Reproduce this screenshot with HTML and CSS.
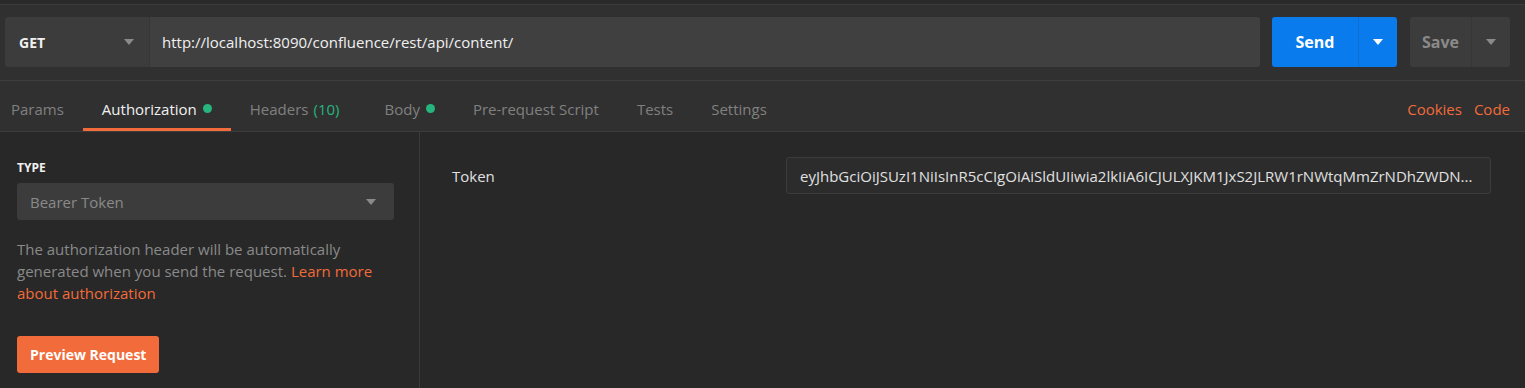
FILE: index.html
```html
<!DOCTYPE html>
<html>
<head>
<meta charset="utf-8">
<link rel="stylesheet" href="styles.css">
</head>
<body>
<div class="app">
  <div class="topstrip"></div>
  <div class="request-row">
    <div class="url-group">
      <div class="method">
        <span class="method-name">GET</span>
        <svg class="caret" width="10" height="6" viewBox="0 0 10 6"><path d="M0 0H10L5 6Z" fill="#8a8a8a"/></svg>
      </div>
      <div class="url">http://localhost:8090/confluence/rest/api/content/</div>
    </div>
    <div class="send">
      <span class="send-label">Send</span>
      <span class="send-caret"><svg width="10" height="6" viewBox="0 0 10 6"><path d="M0 0H10L5 6Z" fill="#ffffff"/></svg></span>
    </div>
    <div class="save">
      <span class="save-label">Save</span>
      <span class="save-caret"><svg width="10" height="6" viewBox="0 0 10 6"><path d="M0 0H10L5 6Z" fill="#8a8a8a"/></svg></span>
    </div>
  </div>
  <div class="tabs">
    <div class="tab-list">
      <div class="tab first">Params</div>
      <div class="tab active">Authorization <span class="dot"></span></div>
      <div class="tab headers">Headers <span class="count">(10)</span></div>
      <div class="tab">Body <span class="dot"></span></div>
      <div class="tab">Pre-request Script</div>
      <div class="tab">Tests</div>
      <div class="tab">Settings</div>
    </div>
    <div class="tab-links">
      <span class="link">Cookies</span>
      <span class="link">Code</span>
    </div>
  </div>
  <div class="content">
    <div class="left">
      <div class="type-label">TYPE</div>
      <div class="select">
        <span>Bearer Token</span>
        <svg width="10" height="6" viewBox="0 0 10 6"><path d="M0 0H10L5 6Z" fill="#8a8a8a"/></svg>
      </div>
      <p class="desc">The authorization header will be automatically generated when you send the request. <span class="link">Learn more about authorization</span></p>
      <div class="preview">Preview Request</div>
    </div>
    <div class="right">
      <div class="field">
        <div class="field-label">Token</div>
        <div class="token">eyJhbGciOiJSUzI1NiIsInR5cCIgOiAiSldUIiwia2lkIiA6ICJULXJKM1JxS2JLRW1rNWtqMmZrNDhZWDN...</div>
      </div>
    </div>
  </div>
</div>
</body>
</html>
```
FILE: styles.css
```css
* { box-sizing: border-box; }
html, body { margin: 0; padding: 0; }
body {
  background: #282828;
  font-family: "Open Sans", "Noto Sans", sans-serif;
  font-size: 15px;
  color: #e0e0e0;
  width: 1525px;
  height: 388px;
  overflow: hidden;
}
.app { display: flex; flex-direction: column; height: 388px; }
.topstrip {
  height: 5px;
  background: #2a2a2a;
  border-bottom: 1px solid #3b3b3b;
}
.request-row {
  display: flex;
  align-items: center;
  background: #303030;
  padding: 12px 15px 13px 5px;
  border-bottom: 1px solid #3d3d3d;
}
.url-group {
  display: flex;
  flex: 1;
  height: 50px;
  border-radius: 3px;
  overflow: hidden;
  margin-right: 12px;
}
.method {
  width: 145px;
  background: #3c3c3c;
  display: flex;
  align-items: center;
  justify-content: space-between;
  padding: 0 15px 0 14px;
  border-right: 1px solid #363636;
}
.method-name { font-weight: 700; color: #f0f0f0; font-size: 14px; }
.url {
  flex: 1;
  background: #404040;
  display: flex;
  align-items: center;
  padding-left: 12px;
  color: #f0f0f0;
}
.send {
  display: flex;
  width: 125px;
  height: 50px;
  background: #097bed;
  border-radius: 3px;
  margin-right: 13px;
}
.send-label {
  width: 87px;
  display: flex;
  align-items: center;
  justify-content: center;
  font-weight: 700;
  font-size: 16px;
  color: #ffffff;
  border-right: 1px solid #0a6fd6;
}
.send-caret, .save-caret {
  flex: 1;
  display: flex;
  align-items: center;
  justify-content: center;
}
.save {
  display: flex;
  width: 100px;
  height: 50px;
  background: #3c3c3c;
  border-radius: 3px;
}
.save-label {
  width: 62px;
  display: flex;
  align-items: center;
  justify-content: center;
  font-weight: 700;
  font-size: 16px;
  color: #8a8a8a;
  border-right: 1px solid #363636;
}
.tabs {
  display: flex;
  justify-content: space-between;
  align-items: stretch;
  height: 51px;
  background: #303030;
  border-bottom: 1px solid #3d3d3d;
}
.tab-list { display: flex; }
.tab {
  display: flex;
  align-items: center;
  padding: 8px 19px 0 19px;
  color: #808080;
  border-bottom: 3px solid transparent;
}
.tab.first { padding-left: 11px; }
.tab.headers { padding-right: 26px; }
.tab.active {
  color: #f0f0f0;
  border-bottom-color: #f26b3a;
}
.dot {
  display: inline-block;
  width: 9px;
  height: 9px;
  border-radius: 50%;
  background: #26b47f;
  margin-left: 6px;
}
.count { color: #26b47f; margin-left: 5px; }
.tab-links {
  display: flex;
  align-items: center;
  gap: 12px;
  padding-right: 15px;
  padding-top: 8px;
  padding-bottom: 3px;
}
.link { color: #f26b3a; }
.content { display: flex; flex: 1; }
.left {
  width: 420px;
  border-right: 1px solid #3a3a3a;
  padding: 28px 25px 0 17px;
}
.type-label {
  font-size: 12px;
  font-weight: 700;
  color: #f0f0f0;
  line-height: 16px;
  margin-bottom: 7px;
}
.select {
  height: 37px;
  background: #3c3c3c;
  border-radius: 3px;
  display: flex;
  align-items: center;
  justify-content: space-between;
  padding: 0 18px 0 13px;
  color: #8a8a8a;
}
.desc {
  margin: 18px 0 0 0;
  color: #8a8a8a;
  line-height: 22px;
}
.preview {
  display: inline-flex;
  align-items: center;
  margin-top: 32px;
  height: 37px;
  padding: 0 13px;
  background: #f26b3a;
  color: #ffffff;
  border-radius: 3px;
  font-size: 14px;
  font-weight: 700;
}
.right { flex: 1; padding: 25px 34px 0 32px; }
.field { display: flex; align-items: center; }
.field-label { width: 334px; color: #e0e0e0; }
.token {
  flex: 1;
  height: 37px;
  display: flex;
  align-items: center;
  border: 1px solid #3c3c3c;
  background: #2c2c2c;
  border-radius: 3px;
  padding: 0 13px;
  color: #e0e0e0;
  white-space: nowrap;
  overflow: hidden;
}
```
